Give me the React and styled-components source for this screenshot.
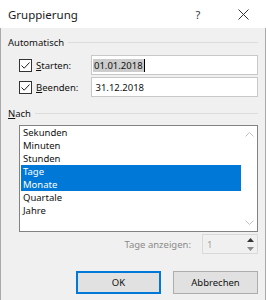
import React from 'react';
import styled, { createGlobalStyle } from 'styled-components';

const Global = createGlobalStyle`
html, body { margin: 0; padding: 0; background: #fff; }
body { font-family: "Noto Sans", "Open Sans", sans-serif; font-size: 9.5px; color: #111; }
`

const Fenster = styled.div`
width: 266px;
height: 300px;
display: flex;
flex-direction: column;
overflow: hidden;
`
const TitelLeiste = styled.div`
height: 28px;
display: flex;
align-items: center;
background: #fff;
padding-left: 8px;
flex-shrink: 0;
`
const Titel = styled.div`
flex: 1;
font-size: 11.5px;
color: #1a1a1a;
`
const TitelKnopf = styled.div`
width: ${p => p.w}px;
display: flex;
justify-content: center;
align-items: center;
font-size: 11px;
color: #333;
`
const Koerper = styled.div`
flex: 1;
background: #f0f0f0;
border-left: 1px solid #a9a9a9;
border-right: 1px solid #a9a9a9;
padding: 7px 7px 0 7px;
display: flex;
flex-direction: column;
`
const Abschnitt = styled.div`
display: flex;
align-items: center;
height: 14px;
margin-top: ${p => p.top || 0}px;
`
const Linie = styled.div`
flex: 1;
height: 1px;
background: #dcdcdc;
margin-left: 4px;
`
const Zeile = styled.div`
display: flex;
align-items: center;
padding-left: 11px;
height: 20px;
margin-top: ${p => p.top || 0}px;
`
const Kasten = styled.div`
width: 11px;
height: 11px;
border: 1px solid #333;
background: #fff;
display: flex;
align-items: center;
justify-content: center;
`
const Beschriftung = styled.div`
width: 55px;
margin-left: 4px;
`
const Feld = styled.div`
flex: 1;
height: 18px;
border: 1px solid #c8c8c8;
background: #fff;
display: flex;
align-items: center;
padding-left: 1px;
`
const Markiert = styled.span`
background: #cccccc;
padding: 0 1px;
line-height: 13px;
`
const Cursor = styled.span`
display: inline-block;
width: 1px;
height: 13px;
background: #000;
`
const Liste = styled.div`
margin: 5px 0 0 11px;
height: 105px;
border: 1px solid #828282;
background: #fff;
display: flex;
`
const Eintraege = styled.div`
flex: 1;
padding-left: 1px;
`
const Eintrag = styled.div`
height: 13px;
line-height: 13px;
padding-left: 2px;
background: ${p => p.sel ? '#0078d7' : 'transparent'};
color: ${p => p.sel ? '#fff' : '#111'};
`
const Scrollleiste = styled.div`
width: 16px;
display: flex;
flex-direction: column;
justify-content: space-between;
align-items: center;
padding: 6px 0 6px 0;
`
const SpinZeile = styled.div`
display: flex;
justify-content: flex-end;
align-items: center;
margin-top: 2px;
height: 20px;
`
const GrauText = styled.div`
color: #8a8a8a;
margin-right: 11px;
`
const SpinFeld = styled.div`
width: 54px;
height: 18px;
border: 1px solid #d9d9d9;
background: #f0f0f0;
display: flex;
align-items: center;
`
const SpinWert = styled.div`
flex: 1;
padding-left: 4px;
color: #a0a0a0;
`
const SpinKnoepfe = styled.div`
width: 14px;
height: 18px;
display: flex;
flex-direction: column;
justify-content: space-around;
align-items: center;
`
const KnopfLeiste = styled.div`
display: flex;
justify-content: flex-end;
gap: 12px;
margin-top: 17px;
`
const Knopf = styled.button`
width: 85px;
height: 23px;
font-family: inherit;
font-size: 9.5px;
color: #111;
background: #e1e1e1;
border: ${p => p.standard ? '2px solid #0078d7' : '1px solid #adadad'};
padding: 0;
`

const Pfeil = ({ runter, farbe }) => (
  <svg width="7" height="4" viewBox="0 0 7 4">
    <polygon points={runter ? '0,0 7,0 3.5,4' : '0,4 7,4 3.5,0'} fill={farbe} />
  </svg>
)

const Winkel = ({ runter }) => (
  <svg width="9" height="5" viewBox="0 0 9 5">
    <polyline points={runter ? '0.5,0.5 4.5,4.5 8.5,0.5' : '0.5,4.5 4.5,0.5 8.5,4.5'} fill="none" stroke="#c2c2c2" strokeWidth="1" />
  </svg>
)

const Haken = () => (
  <svg width="11" height="11" viewBox="0 0 11 11">
    <polyline points="1.5,5.5 4.2,8.2 9.5,2.5" fill="none" stroke="#222" strokeWidth="1" />
  </svg>
)

export default class App extends React.Component {
  render() {
    const eintraege = ['Sekunden', 'Minuten', 'Stunden', 'Tage', 'Monate', 'Quartale', 'Jahre']
    const auswahl = ['Tage', 'Monate']
    return (
      <Fenster>
        <Global />
        <TitelLeiste>
          <Titel>Gruppierung</Titel>
          <TitelKnopf w={44}>?</TitelKnopf>
          <TitelKnopf w={46}>
            <svg width="11" height="11" viewBox="0 0 11 11">
              <path d="M0.5 0.5 L10.5 10.5 M10.5 0.5 L0.5 10.5" stroke="#333" strokeWidth="1" />
            </svg>
          </TitelKnopf>
        </TitelLeiste>
        <Koerper>
          <Abschnitt>Automatisch<Linie /></Abschnitt>
          <Zeile top={6}>
            <Kasten><Haken /></Kasten>
            <Beschriftung><u>S</u>tarten:</Beschriftung>
            <Feld><Markiert>01.01.2018</Markiert><Cursor /></Feld>
          </Zeile>
          <Zeile top={2}>
            <Kasten><Haken /></Kasten>
            <Beschriftung><u>B</u>eenden:</Beschriftung>
            <Feld>&nbsp;31.12.2018</Feld>
          </Zeile>
          <Abschnitt top={9}><span><u>N</u>ach</span><Linie /></Abschnitt>
          <Liste>
            <Eintraege>
              {eintraege.map(e => (
                <Eintrag key={e} sel={auswahl.includes(e)}>{e}</Eintrag>
              ))}
            </Eintraege>
            <Scrollleiste>
              <Winkel />
              <Winkel runter />
            </Scrollleiste>
          </Liste>
          <SpinZeile>
            <GrauText>Tage anzeigen:</GrauText>
            <SpinFeld>
              <SpinWert>1</SpinWert>
              <SpinKnoepfe>
                <Pfeil farbe="#333" />
                <Pfeil runter farbe="#8a8a8a" />
              </SpinKnoepfe>
            </SpinFeld>
          </SpinZeile>
          <KnopfLeiste>
            <Knopf standard>OK</Knopf>
            <Knopf>Abbrechen</Knopf>
          </KnopfLeiste>
        </Koerper>
      </Fenster>
    )
  }
}
